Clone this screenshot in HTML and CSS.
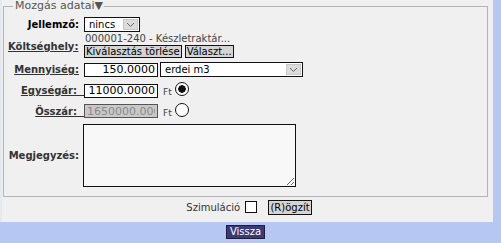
FILE: index.html
```html
<!DOCTYPE html>
<html lang="hu">
<head>
    <meta charset="UTF-8">
    <title>Mozgás adatai</title>
    <link rel="stylesheet" href="styles.css">
</head>
<body>

<div class="panel">
    <form name="mozgasForm" onsubmit="return false">
        <fieldset class="mozgas">
            <legend>Mozgás adatai&#9660;</legend>
            <div class="grid">
                <label class="lbl lbl-plain">Jellemző:</label>
                <div class="field">
                    <span class="sel sel-short">
                        <select name="jellemzo"><option>nincs</option></select>
                        <span class="arrow"><svg width="9" height="6" viewBox="0 0 9 6"><path d="M1 1 L4.5 4.5 L8 1" fill="none" stroke="#666" stroke-width="1"/></svg></span>
                    </span>
                </div>

                <label class="lbl lbl-link lbl-short">Költséghely:</label>
                <div class="field field-col">
                    <span class="info">000001-240 - Készletraktár...</span>
                    <span class="btns">
                        <button type="button" class="btn">Kiválasztás törlése</button>
                        <button type="button" class="btn">Választ...</button>
                    </span>
                </div>

                <label class="lbl lbl-link">Mennyiség:</label>
                <div class="field">
                    <input type="text" class="num" name="mennyiseg" value="150.0000">
                    <span class="sel sel-long">
                        <select name="me"><option>erdei m3</option></select>
                        <span class="arrow"><svg width="9" height="6" viewBox="0 0 9 6"><path d="M1 1 L4.5 4.5 L8 1" fill="none" stroke="#666" stroke-width="1"/></svg></span>
                    </span>
                </div>

                <label class="lbl lbl-link lbl-wide">Egységár:&nbsp;&nbsp;</label>
                <div class="field">
                    <input type="text" class="num" name="egysegar" value="11000.0000">
                    <span class="ft">Ft</span>
                    <input type="radio" class="rad" name="szamol" checked>
                </div>

                <label class="lbl lbl-link lbl-wide">Összár:&nbsp;&nbsp;</label>
                <div class="field">
                    <input type="text" class="num num-off" name="osszar" value="1650000.0000" disabled>
                    <span class="ft">Ft</span>
                    <input type="radio" class="rad" name="szamol">
                </div>

                <label class="lbl lbl-plain lbl-grey">Megjegyzés:</label>
                <div class="field">
                    <textarea name="megjegyzes"></textarea>
                </div>
            </div>
        </fieldset>

        <div class="save-row">
            Szimuláció <input type="checkbox" class="chk" name="szimulacio">
            <button type="submit" class="btn btn-save">(R)ögzít</button>
        </div>
    </form>
</div>

<div class="back-row">
    <button type="button" class="btn-back">Vissza</button>
</div>

</body>
</html>
```

FILE: styles.css
```css
body {
    margin: 0;
    background-color: #b7c7f4;
    font-family: "DejaVu Sans", Verdana, sans-serif;
    font-size: 10px;
    color: #222;
}

.panel {
    width: 493px;
    height: 222px;
    background-color: #f0f0f0;
    border-left: 2px solid #e6e8f2;
    box-sizing: border-box;
    padding-left: 1px;
}

.mozgas {
    margin: 0;
    width: 485px;
    height: 197px;
    box-sizing: border-box;
    border: 1px solid #b4b4b4;
    padding: 3px 4px 6px 4px;
}

.mozgas legend {
    color: #555;
    font-size: 11px;
    line-height: 12px;
    padding: 0 1px 0 2px;
    margin-left: 5px;
}

.grid {
    display: grid;
    grid-template-columns: 71px auto;
    grid-template-rows: 18px 26px 21px 21px 20px 68px;
    column-gap: 5px;
    align-items: center;
}

.lbl {
    text-align: right;
    font-weight: bold;
    font-size: 10px;
    white-space: nowrap;
}

.lbl-plain {
    color: #000;
}

.lbl-grey {
    color: #333;
}

.lbl-link {
    color: #333;
    text-decoration: underline;
}

.lbl-short {
    margin-right: 3px;
}

.lbl-wide {
    margin-right: -5px;
}

.field {
    display: flex;
    align-items: center;
}

.field-col {
    flex-direction: column;
    align-items: flex-start;
    gap: 1px;
}

.info {
    color: #444;
    line-height: 10px;
    padding-left: 1px;
}

.btns {
    display: flex;
    gap: 3px;
}

.btn {
    font-family: inherit;
    font-size: 10px;
    height: 13px;
    line-height: 10px;
    padding: 0 1px;
    border: 1px solid #111;
    background-color: #d4d4d4;
    color: #000;
    border-radius: 0;
}

.sel {
    display: inline-flex;
    align-items: center;
    height: 15px;
    box-sizing: border-box;
    border: 1px solid #111;
    background-color: #fff;
}

.sel select {
    appearance: none;
    border: none;
    background: transparent;
    font-family: inherit;
    font-size: 10px;
    padding: 0 0 0 4px;
    height: 13px;
    flex: 1;
    min-width: 0;
    outline: none;
    color: #000;
}

.sel-short {
    width: 56px;
}

.sel-long {
    width: 143px;
    margin-left: 2px;
}

.arrow {
    width: 15px;
    height: 11px;
    margin-right: 1px;
    background-color: #dcdcdc;
    border: 1px solid #c8c8c8;
    display: flex;
    align-items: flex-end;
    justify-content: center;
    box-sizing: border-box;
    flex: none;
}

.arrow svg {
    margin-bottom: 1px;
}

.num {
    width: 74px;
    height: 14px;
    box-sizing: border-box;
    border: 1px solid #111;
    padding: 0 2px;
    font-family: inherit;
    font-size: 11px;
    text-align: right;
    background-color: #fff;
    color: #000;
}

.num-off {
    background-color: #c9c9c9;
    color: #8a8a8a;
    border-color: #555;
    text-align: left;
}

.ft {
    font-size: 9px;
    color: #444;
    margin: 3px 2px 0 5px;
}

.rad {
    appearance: none;
    width: 14px;
    height: 14px;
    margin: 0 0 3px 1px;
    border: 1px solid #111;
    border-radius: 50%;
    background-color: #fff;
}

.rad:checked {
    background: radial-gradient(circle, #111 0, #111 3.5px, #fff 4px);
}

textarea {
    width: 213px;
    height: 63px;
    box-sizing: border-box;
    border: 1px solid #111;
    background-color: #f8f8f8;
    font-family: inherit;
    font-size: 10px;
    margin: 0 0 0 -1px;
}

.save-row {
    text-align: center;
    padding-top: 3px;
    padding-left: 2px;
    color: #333;
    font-size: 10px;
}

.chk {
    appearance: none;
    width: 12px;
    height: 12px;
    margin: 0 8px 0 2px;
    border: 1px solid #111;
    background-color: #fff;
    vertical-align: -2px;
}

.btn-save {
    height: 15px;
    padding: 0 1px;
}

.back-row {
    width: 491px;
    text-align: center;
    padding-top: 3px;
}

.btn-back {
    font-family: inherit;
    font-size: 10px;
    height: 14px;
    line-height: 12px;
    padding: 0 3px;
    border: 1px solid #1e1e3a;
    background-color: #3a3a78;
    color: #fff;
    border-radius: 0;
}
```
